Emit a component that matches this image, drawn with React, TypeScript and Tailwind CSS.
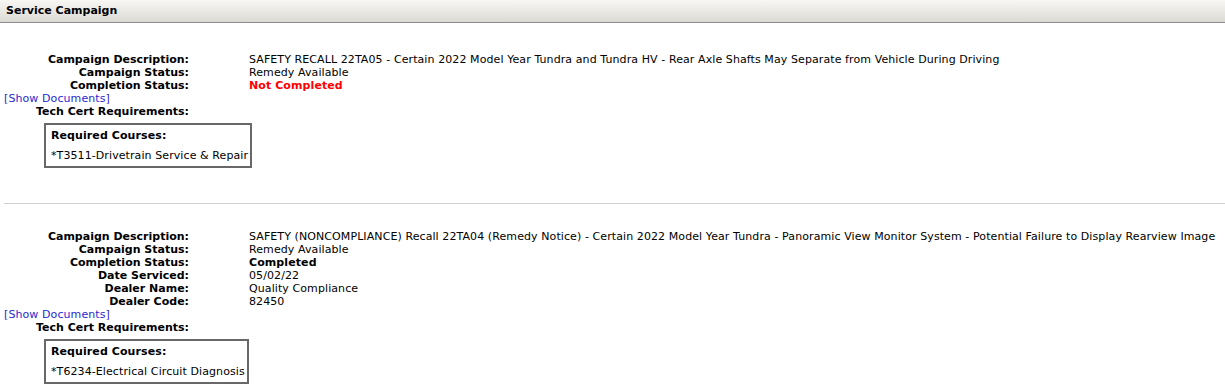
import React from 'react'

type Row = { label: string; value: React.ReactNode }

interface Campaign {
  rows: Row[]
  course: string
}

const campaigns: Campaign[] = [
  {
    rows: [
      { label: 'Campaign Description:', value: 'SAFETY RECALL 22TA05 - Certain 2022 Model Year Tundra and Tundra HV - Rear Axle Shafts May Separate from Vehicle During Driving' },
      { label: 'Campaign Status:', value: 'Remedy Available' },
      { label: 'Completion Status:', value: <span className="font-bold text-[#ff0000]">Not Completed</span> },
    ],
    course: '*T3511-Drivetrain Service & Repair',
  },
  {
    rows: [
      { label: 'Campaign Description:', value: 'SAFETY (NONCOMPLIANCE) Recall 22TA04 (Remedy Notice) - Certain 2022 Model Year Tundra - Panoramic View Monitor System - Potential Failure to Display Rearview Image' },
      { label: 'Campaign Status:', value: 'Remedy Available' },
      { label: 'Completion Status:', value: <span className="font-bold">Completed</span> },
      { label: 'Date Serviced:', value: '05/02/22' },
      { label: 'Dealer Name:', value: 'Quality Compliance' },
      { label: 'Dealer Code:', value: '82450' },
    ],
    course: '*T6234-Electrical Circuit Diagnosis',
  },
]

function CampaignBlock({ campaign }: { campaign: Campaign }) {
  return (
    <div>
      <div className="grid grid-cols-[185px_1fr]">
        {campaign.rows.map(r => (
          <React.Fragment key={r.label}>
            <div className="text-right font-bold whitespace-nowrap">{r.label}</div>
            <div className="pl-[60px] whitespace-nowrap tracking-[0.09px]">{r.value}</div>
          </React.Fragment>
        ))}
      </div>
      <a className="block text-[#2b2bd0] cursor-pointer tracking-[0.09px]">[Show Documents]</a>
      <div className="grid grid-cols-[185px_1fr]">
        <div className="text-right font-bold whitespace-nowrap">Tech Cert Requirements:</div>
        <div />
      </div>
      <div className="pl-[40px] pt-[5px]">
        <div className="inline-block border-2 border-[#686868] pl-[5px] pr-[2px] pt-[4px] pb-[4px] tracking-[0.09px]">
          <div className="font-bold">Required Courses:</div>
          <div className="mt-[7px]">{campaign.course}</div>
        </div>
      </div>
    </div>
  )
}

export default function App() {
  return (
    <div className="w-[1225px] h-[387px] overflow-hidden bg-white text-[11px] leading-[13px] text-black" style={{ fontFamily: '"DejaVu Sans", Verdana, sans-serif' }}>
      <div className="h-[23px] bg-gradient-to-b from-[#f8f7f4] to-[#dcdad4] border-b border-[#8c8c8c] px-[6px] pt-[4px] font-bold">
        Service Campaign
      </div>
      <div className="pl-1 pt-[30px]">
        <CampaignBlock campaign={campaigns[0]} />
        <div className="mt-[35px] mb-[26px] border-t border-[#cfcfcf]" />
        <CampaignBlock campaign={campaigns[1]} />
      </div>
    </div>
  )
}
